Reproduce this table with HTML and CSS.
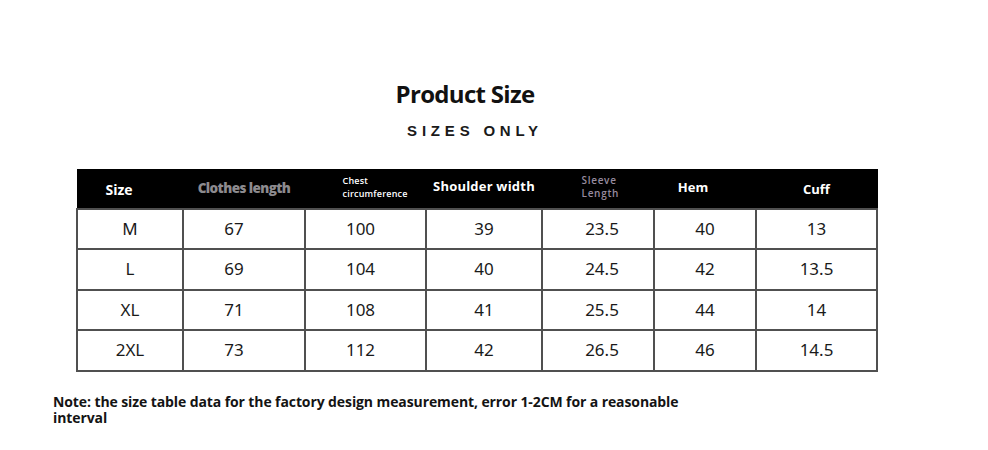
FILE: index.html
```html
<!DOCTYPE html>
<html>
<head>
<meta charset="utf-8">
<link rel="stylesheet" href="styles.css">
</head>
<body>
<div class="page">
  <header class="heading">
    <h1 class="title">Product Size</h1>
    <p class="subtitle">SIZES ONLY</p>
  </header>
  <table class="sizes">
    <colgroup>
      <col class="c1"><col class="c2"><col class="c3"><col class="c4"><col class="c5"><col class="c6"><col class="c7">
    </colgroup>
    <thead>
      <tr>
        <th class="h-size">Size</th>
        <th class="h-grey">Clothes length</th>
        <th class="h-small h-chest">Chest<br>circumference</th>
        <th class="h-mid">Shoulder width</th>
        <th class="h-small h-purple">Sleeve<br>Length</th>
        <th class="h-hem">Hem</th>
        <th>Cuff</th>
      </tr>
    </thead>
    <tbody>
      <tr><td>M</td><td>67</td><td>100</td><td>39</td><td>23.5</td><td>40</td><td>13</td></tr>
      <tr><td>L</td><td>69</td><td>104</td><td>40</td><td>24.5</td><td>42</td><td>13.5</td></tr>
      <tr><td>XL</td><td>71</td><td>108</td><td>41</td><td>25.5</td><td>44</td><td>14</td></tr>
      <tr><td>2XL</td><td>73</td><td>112</td><td>42</td><td>26.5</td><td>46</td><td>14.5</td></tr>
    </tbody>
  </table>
  <p class="note">Note: the size table data for the factory design measurement, error 1-2CM for a reasonable interval</p>
</div>
</body>
</html>
```

FILE: styles.css
```css
html, body {
  margin: 0;
  padding: 0;
  background: #fff;
}

.page {
  width: 988px;
  height: 450px;
  padding-top: 80px;
  box-sizing: border-box;
}

.heading {
  width: 930px;
  text-align: center;
}

.title {
  margin: 0;
  font-family: "Open Sans", "Liberation Sans", sans-serif;
  font-weight: 700;
  font-size: 24px;
  letter-spacing: -0.7px;
  line-height: 28px;
  color: #111;
}

.subtitle {
  margin: 14px 0 0 0;
  padding-left: 20px;
  font-family: "Liberation Sans", Arial, sans-serif;
  font-weight: 700;
  font-size: 15px;
  letter-spacing: 4.8px;
  line-height: 18px;
  color: #1a1a1a;
}

.sizes {
  margin: 29px 0 0 76px;
  width: 800px;
  border-collapse: collapse;
  table-layout: fixed;
  font-family: "Noto Sans", "Open Sans", sans-serif;
}

.c1 { width: 106px; }
.c2 { width: 122px; }
.c3 { width: 121px; }
.c4 { width: 116px; }
.c5 { width: 112px; }
.c6 { width: 102px; }
.c7 { width: 121px; }

.sizes thead tr {
  height: 39px;
}

.sizes thead th {
  background: #000;
  color: #fff;
  padding: 0;
  font-family: "Open Sans", "Liberation Sans", sans-serif;
  font-weight: 700;
  font-size: 13px;
  line-height: 16px;
  text-align: center;
  vertical-align: middle;
  border: 1px solid #000;
}

.sizes thead .h-size {
  font-size: 14px;
  padding: 2px 22px 0 0;
}

.sizes thead .h-grey {
  color: #8c8a8e;
  font-size: 13.5px;
  font-weight: 800;
  letter-spacing: -0.6px;
  padding-bottom: 2px;
}

.sizes thead .h-small {
  font-size: 9px;
  line-height: 13px;
  text-align: left;
  font-weight: 600;
  letter-spacing: 0.2px;
  padding-bottom: 4px;
}

.sizes thead .h-chest {
  padding-left: 37px;
}

.sizes thead .h-purple {
  color: #978b9f;
  font-size: 10px;
  padding-left: 39px;
  letter-spacing: 0.7px;
}

.sizes thead .h-mid {
  letter-spacing: 0.2px;
  padding-bottom: 6px;
}

.sizes thead .h-hem {
  padding: 0 24px 4px 0;
}

.sizes tbody tr {
  height: 40.5px;
}

.sizes tbody td {
  padding: 0;
  border: 2px solid #505050;
  text-align: center;
  vertical-align: middle;
  font-size: 17px;
  line-height: 20px;
  color: #1a1a1a;
}

.sizes tbody td:nth-child(2) {
  padding-right: 20px;
}

.sizes tbody td:nth-child(3) {
  padding-right: 10px;
}

.sizes tbody td:nth-child(5) {
  padding-left: 8px;
}

.note {
  margin: 22px 0 0 53px;
  width: 660px;
  font-family: "Open Sans", "Liberation Sans", sans-serif;
  font-weight: 700;
  font-size: 14px;
  letter-spacing: -0.1px;
  line-height: 16px;
  color: #141414;
}
```
